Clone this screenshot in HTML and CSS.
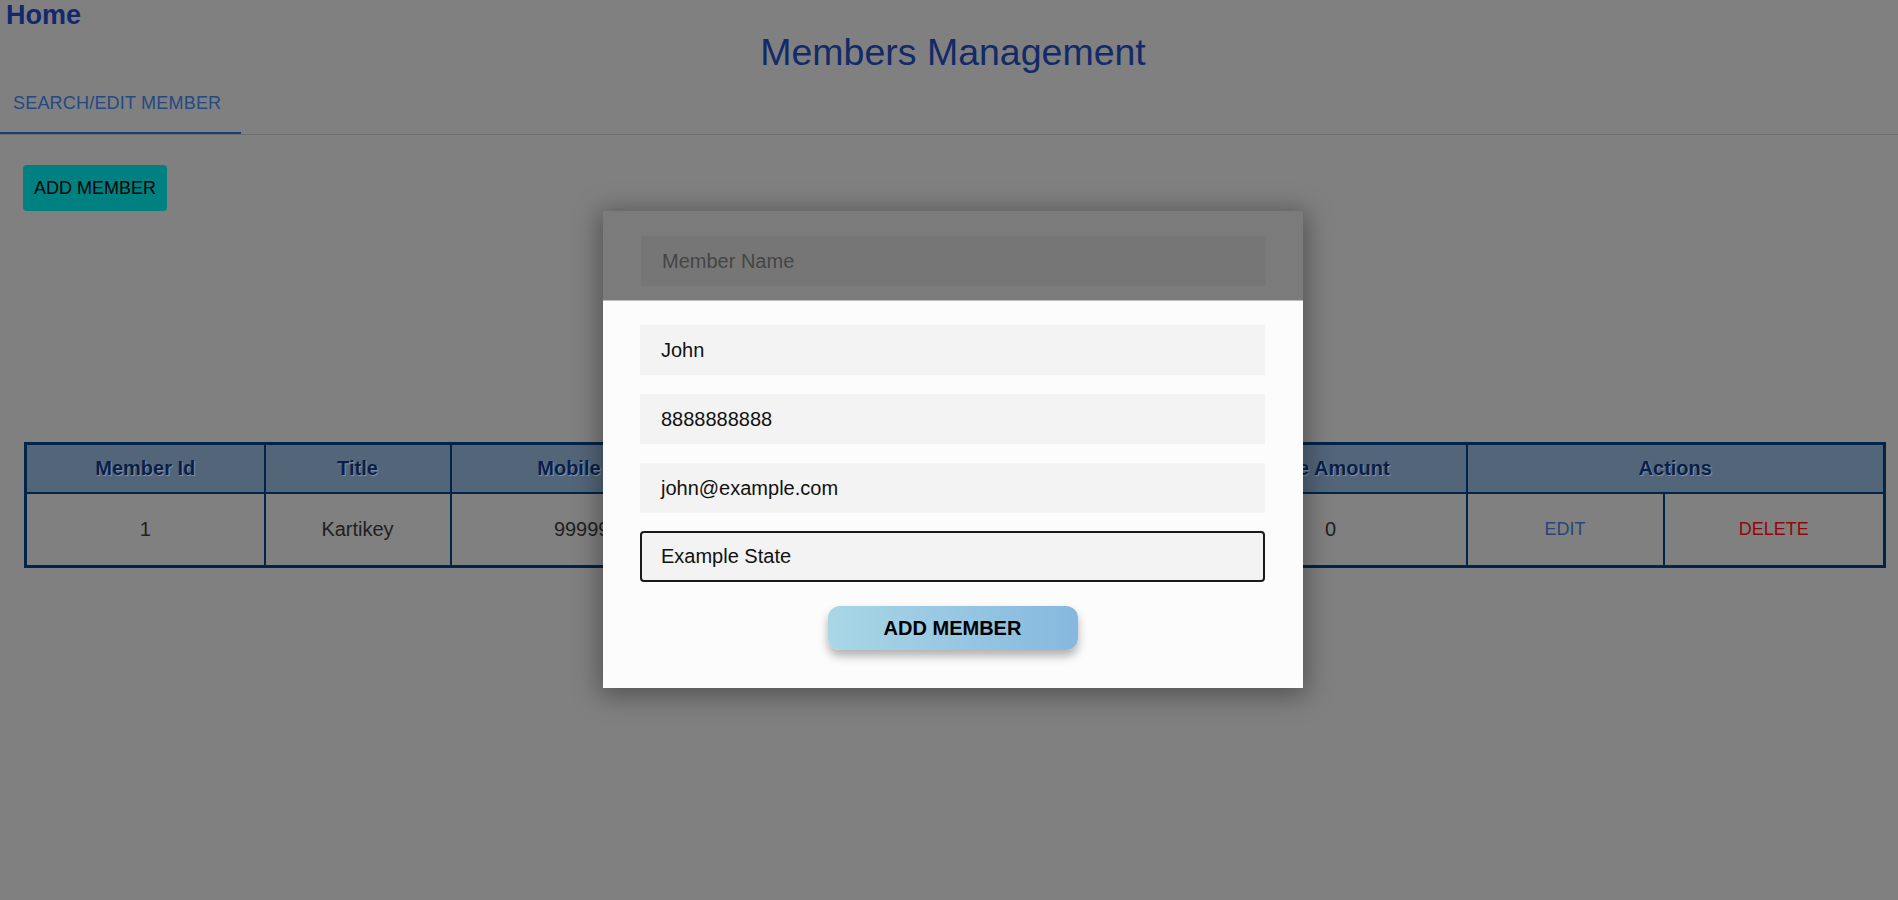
FILE: index.html
```html
<!DOCTYPE html>
<html lang="en">
<head>
<meta charset="utf-8">
<title>Members Management</title>
<link rel="stylesheet" href="styles.css">
</head>
<body>
<div class="page">
  <a class="home">Home</a>
  <h1 class="title">Members Management</h1>
  <div class="tabs">
    <div class="tab active">SEARCH/EDIT MEMBER</div>
  </div>
  <div class="toolbar">
    <button class="add-btn">ADD MEMBER</button>
  </div>
  <div class="table-wrap">
    <table class="members">
      <colgroup>
        <col class="c-id"><col class="c-title"><col class="c-mobile"><col class="c-email"><col class="c-state"><col class="c-amount"><col class="c-edit"><col class="c-delete">
      </colgroup>
      <thead>
        <tr>
          <th>Member Id</th>
          <th>Title</th>
          <th>Mobile Number</th>
          <th>Email</th>
          <th>State</th>
          <th>Due Amount</th>
          <th colspan="2">Actions</th>
        </tr>
      </thead>
      <tbody>
        <tr>
          <td>1</td>
          <td>Kartikey</td>
          <td>9999999999</td>
          <td>kartikey@example.com</td>
          <td>Delhi</td>
          <td>0</td>
          <td class="action edit">EDIT</td>
          <td class="action delete">DELETE</td>
        </tr>
      </tbody>
    </table>
  </div>
</div>

<div class="modal">
  <div class="modal-head">
    <div class="field dim">Member Name</div>
  </div>
  <div class="modal-body">
    <div class="field">John</div>
    <div class="field">8888888888</div>
    <div class="field">john@example.com</div>
    <div class="field focused">Example State</div>
    <button class="submit">ADD MEMBER</button>
  </div>
</div>
</body>
</html>
```

FILE: styles.css
```css
html, body {
  margin: 0;
  padding: 0;
}
body {
  background: #808080;
  font-family: "Liberation Sans", Arial, sans-serif;
  width: 1898px;
  height: 900px;
  overflow: hidden;
  position: relative;
}
.page {
  display: flex;
  flex-direction: column;
}
.home {
  display: block;
  font-size: 27px;
  line-height: 30px;
  font-weight: bold;
  color: #13286e;
  padding-left: 6px;
}
.title {
  margin: 0;
  font-size: 37.5px;
  line-height: 44px;
  font-weight: normal;
  color: #132a68;
  text-align: center;
  padding-left: 8px;
}
.tabs {
  display: flex;
  border-bottom: 1px solid #6e6e6e;
}
.tab {
  height: 58px;
  display: flex;
  align-items: center;
  padding: 0 20px 0 13px;
  font-size: 18px;
  line-height: 21px;
  letter-spacing: 0.2px;
  color: #234a84;
  border-bottom: 2px solid transparent;
}
.tab.active {
  border-bottom-color: #143f7a;
}
.toolbar {
  padding: 30px 23px 0;
  display: flex;
}
.add-btn {
  height: 46px;
  padding: 0 11px;
  font-family: inherit;
  font-size: 18px;
  background: #008080;
  color: #050505;
  border: none;
  border-radius: 4px;
}
.table-wrap {
  padding: 231px 15px 0 24px;
}
.members {
  width: 1859px;
  table-layout: fixed;
  border-collapse: collapse;
  border: 3px solid #01244a;
}
.c-id { width: 239px; }
.c-title { width: 186px; }
.c-mobile { width: 318px; }
.c-email { width: 233px; }
.c-state { width: 193px; }
.c-amount { width: 272px; }
.c-edit { width: 197px; }
.c-delete { width: 221px; }
.members th, .members td {
  border: 2px solid #01244a;
  text-align: center;
  padding: 0;
}
.members th {
  height: 47px;
  background: #536579;
  color: #0a1f48;
  font-size: 20px;
  font-weight: bold;
  text-shadow: 1px 1px 1px #8896a6;
}
.members td {
  height: 71px;
  color: #1f1f1f;
  font-size: 20px;
}
.members td.action { font-size: 18px; }
.members td.edit { color: #284678; }
.members td.delete { color: #920808; }

.modal {
  position: absolute;
  left: 603px;
  top: 211px;
  width: 700px;
  box-shadow: 0 4px 24px 4px rgba(0, 0, 0, 0.35);
}
.modal-head {
  background: #7b7b7b;
  padding: 25px 37px 14px 38px;
  border-bottom: 1px solid #bdbdbd;
}
.modal-body {
  background: #fcfcfc;
  padding: 24px 38px 38px 37px;
  display: flex;
  flex-direction: column;
  align-items: center;
}
.field {
  box-sizing: border-box;
  width: 625px;
  height: 50px;
  display: flex;
  align-items: center;
  padding-left: 21px;
  font-size: 20px;
  background: #f3f3f3;
  color: #111;
  margin-bottom: 19px;
}
.field.dim {
  background: #767676;
  color: #454545;
  margin-bottom: 0;
}
.field.focused {
  height: 51px;
  margin-top: -1px;
  border: 2px solid #1a1a1a;
  border-radius: 4px;
  padding-left: 19px;
  margin-bottom: 24px;
}
.submit {
  width: 250px;
  height: 44px;
  border: none;
  border-radius: 12px;
  background: linear-gradient(90deg, #a9d7e6, #86b8df);
  color: #000;
  font-family: inherit;
  font-weight: bold;
  font-size: 20px;
  box-shadow: 0 6px 10px rgba(0, 0, 0, 0.3);
}
```
